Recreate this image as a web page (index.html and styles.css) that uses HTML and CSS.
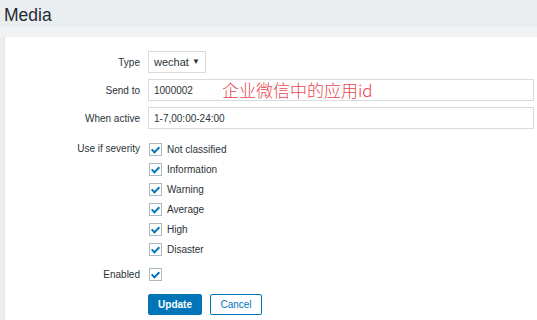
FILE: index.html
```html
<!DOCTYPE html>
<html lang="en">
<head>
  <meta charset="UTF-8">
  <title>Media</title>
  <link rel="stylesheet" href="styles.css">
</head>
<body>

<header class="page-header">
  <h1>Media</h1>
</header>

<div class="panel">
  <div class="form-row">
    <label class="form-label">Type</label>
    <div class="select">wechat <span class="caret">&#9660;</span></div>
  </div>

  <div class="form-row">
    <label class="form-label">Send to</label>
    <div class="field">
      <input type="text" class="input" value="1000002">
      <span class="note">企业微信中的应用id</span>
    </div>
  </div>

  <div class="form-row">
    <label class="form-label">When active</label>
    <input type="text" class="input" value="1-7,00:00-24:00">
  </div>

  <div class="form-row severity-row">
    <label class="form-label">Use if severity</label>
    <ul class="check-list">
      <li><span class="check"></span>Not classified</li>
      <li><span class="check"></span>Information</li>
      <li><span class="check"></span>Warning</li>
      <li><span class="check"></span>Average</li>
      <li><span class="check"></span>High</li>
      <li><span class="check"></span>Disaster</li>
    </ul>
  </div>

  <div class="form-row enabled-row">
    <label class="form-label">Enabled</label>
    <span class="check"></span>
  </div>

  <div class="form-row buttons">
    <span class="form-label"></span>
    <button class="btn btn-primary">Update</button>
    <button class="btn btn-alt">Cancel</button>
  </div>
</div>

</body>
</html>
```

FILE: styles.css
```css
html, body {
  overflow: hidden;
}

body {
  margin: 0;
  background: #ebeef0;
  font-family: Arial, "Liberation Sans", sans-serif;
  font-size: 10px;
  color: #2b3338;
}

.page-header {
  height: 37px;
  background: linear-gradient(#ebeef0 0, #ebeef0 27px, #f0f2f4 27px);
}

.page-header h1 {
  margin: 0;
  padding: 3px 0 0 4px;
  font-size: 17.5px;
  font-weight: normal;
  line-height: 24px;
  color: #1f2c33;
}

.panel {
  box-sizing: border-box;
  margin-left: 4px;
  height: 283px;
  background: white;
  border-left: 1px solid #dfe4e7;
  padding-top: 14px;
}

.form-row {
  display: flex;
  align-items: center;
  gap: 8px;
  margin-bottom: 6px;
}

.form-label {
  width: 135px;
  text-align: right;
  flex-shrink: 0;
}

.select {
  box-sizing: border-box;
  height: 22px;
  width: 58px;
  border: 1px solid #d7dcdf;
  padding: 0 5px;
  line-height: 20px;
  font-size: 11px;
  display: flex;
  justify-content: space-between;
}

.caret {
  font-size: 8px;
}

.field {
  position: relative;
}

.input {
  box-sizing: border-box;
  width: 386px;
  height: 22px;
  border: 1px solid #d7dcdf;
  padding: 0 5px;
  font-family: Arial, "Liberation Sans", sans-serif;
  font-size: 10px;
  color: #2b3338;
  margin: 0;
}

.note {
  position: absolute;
  left: 74px;
  top: 0;
  font-family: "Noto Sans CJK SC", serif;
  font-size: 17px;
  font-weight: 300;
  line-height: 21px;
  color: #e8464f;
}

.severity-row {
  align-items: flex-start;
  margin-top: 10px;
}

.severity-row .form-label {
  line-height: 20px;
}

.check-list {
  list-style: none;
  margin: 0;
  padding: 0;
}

.check-list li {
  display: flex;
  align-items: center;
  gap: 5px;
  height: 20px;
}

.check {
  box-sizing: border-box;
  width: 13px;
  height: 13px;
  margin-left: 1px;
  border: 1px solid #acbbc2;
  position: relative;
}

.check::after {
  content: "";
  position: absolute;
  left: 3px;
  top: 1px;
  width: 3px;
  height: 6px;
  border: solid #0275b8;
  border-width: 0 2px 2px 0;
  transform: rotate(45deg);
}

.enabled-row {
  margin-top: 9px;
}

.buttons {
  margin-top: 13px;
}

.btn {
  height: 21px;
  padding: 0;
  font-family: Arial, "Liberation Sans", sans-serif;
  font-size: 10px;
  border-radius: 2px;
  margin: 0;
}

.btn-primary {
  width: 54px;
  background: #0275b8;
  border: 1px solid #0275b8;
  color: white;
  font-weight: bold;
}

.btn-alt {
  width: 52px;
  background: white;
  border: 1px solid #0275b8;
  color: #0275b8;
}
```
